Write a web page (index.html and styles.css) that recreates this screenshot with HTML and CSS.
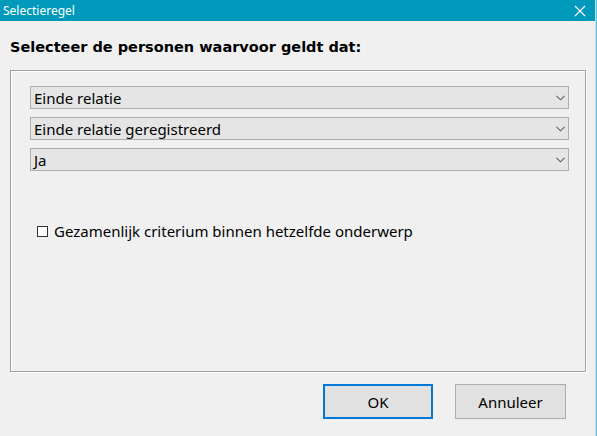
FILE: index.html
```html
<!DOCTYPE html>
<html>
<head>
<meta charset="utf-8">
<link rel="stylesheet" href="styles.css">
</head>
<body>
<div class="window">
  <div class="titlebar">
    <span class="title">Selectieregel</span>
    <svg class="close" width="12" height="12" viewBox="0 0 12 12"><path d="M1 1L11 11M11 1L1 11" stroke="#fff" stroke-width="1.2" fill="none"/></svg>
  </div>
  <div class="content">
    <h1 class="heading">Selecteer de personen waarvoor geldt dat:</h1>
    <div class="group">
      <div class="combo"><span>Einde relatie</span><svg class="chev" width="9" height="6" viewBox="0 0 9 6"><path d="M0.5 0.8L4.5 4.8L8.5 0.8" stroke="#606060" stroke-width="1.1" fill="none"/></svg></div>
      <div class="combo"><span>Einde relatie geregistreerd</span><svg class="chev" width="9" height="6" viewBox="0 0 9 6"><path d="M0.5 0.8L4.5 4.8L8.5 0.8" stroke="#606060" stroke-width="1.1" fill="none"/></svg></div>
      <div class="combo"><span>Ja</span><svg class="chev" width="9" height="6" viewBox="0 0 9 6"><path d="M0.5 0.8L4.5 4.8L8.5 0.8" stroke="#606060" stroke-width="1.1" fill="none"/></svg></div>
      <label class="check"><span class="box"></span><span>Gezamenlijk criterium binnen hetzelfde onderwerp</span></label>
    </div>
    <div class="buttons">
      <div class="btn btn-default">OK</div>
      <div class="btn">Annuleer</div>
    </div>
  </div>
</div>
<div class="edge"></div>
</body>
</html>
```
FILE: styles.css
```css
html, body {
  margin: 0;
  padding: 0;
  background: #f0f0f0;
  width: 597px;
  height: 436px;
  overflow: hidden;
  font-family: "Noto Sans", "Segoe UI", sans-serif;
}
body {
  display: flex;
}
.window {
  width: 595px;
  height: 436px;
  background: #f0f0f0;
  display: flex;
  flex-direction: column;
}
.edge {
  width: 2px;
  height: 436px;
  border-left: 1px solid #cfd8da;
  background: #5ec3da;
  box-sizing: border-box;
}
.titlebar {
  height: 21px;
  background: #0099bc;
  display: flex;
  align-items: center;
  justify-content: space-between;
  padding: 0 9px 0 3px;
}
.title {
  color: #fff;
  font-size: 12px;
  line-height: 21px;
}
.close {
  display: block;
}
.content {
  display: flex;
  flex-direction: column;
}
.heading {
  margin: 15px 0 0 10px;
  font-family: "DejaVu Sans", Verdana, sans-serif;
  font-weight: bold;
  font-size: 14.5px;
  line-height: 22px;
  color: #000;
  height: 34px;
}
.group {
  margin: 0 9px 0 10px;
  height: 302px;
  box-sizing: border-box;
  border: 1px solid #a0a0a0;
  box-shadow: 1px 1px 0 #fff, inset 1px 1px 0 #fff;
  padding: 15px 16px 0 19px;
  display: flex;
  flex-direction: column;
  gap: 8px;
}
.combo {
  height: 23px;
  flex: none;
  box-sizing: border-box;
  border: 1px solid #adadad;
  background: #e5e5e5;
  display: flex;
  align-items: center;
  justify-content: space-between;
  padding: 0 3px 0 3px;
  font-size: 15px;
  color: #000;
}
.chev {
  display: block;
}
.check {
  margin-top: 42px;
  margin-left: 7px;
  display: flex;
  align-items: center;
  gap: 6px;
  font-size: 15px;
  color: #000;
}
.box {
  width: 11px;
  height: 11px;
  border: 1px solid #333;
  background: #fff;
  box-sizing: border-box;
}
.buttons {
  display: flex;
  gap: 22px;
  margin: 12px 0 0 323px;
}
.btn {
  width: 111px;
  height: 35px;
  box-sizing: border-box;
  border: 1px solid #adadad;
  background: #e1e1e1;
  display: flex;
  align-items: center;
  justify-content: center;
  font-size: 15px;
  color: #000;
}
.btn-default {
  width: 110px;
  border: 2px solid #0078d7;
}
```
